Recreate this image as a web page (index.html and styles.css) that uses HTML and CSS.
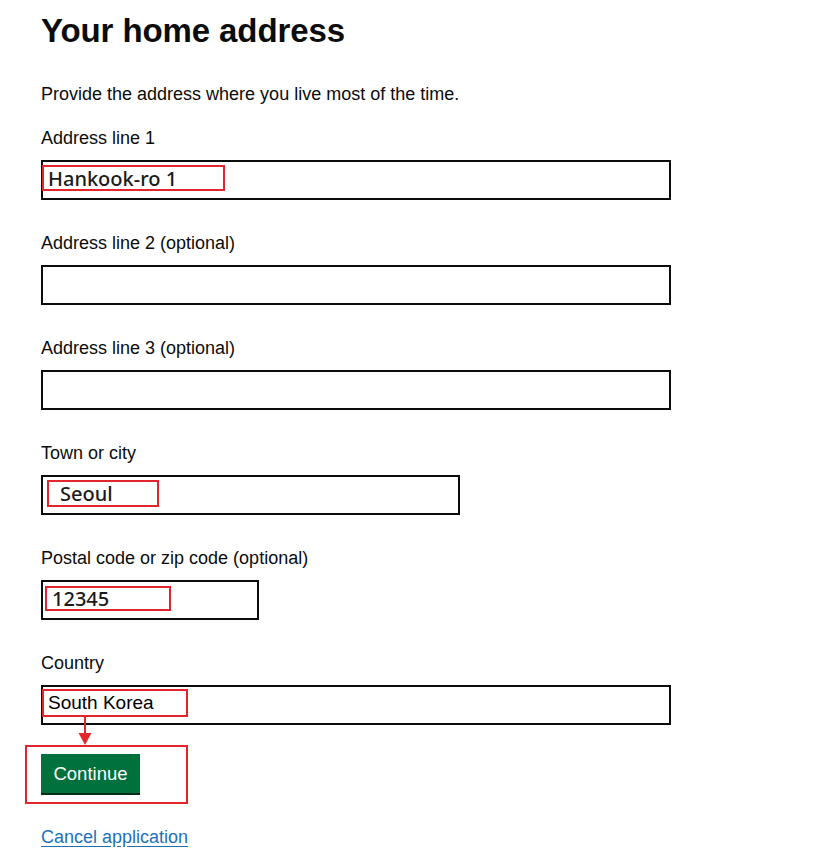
FILE: index.html
```html
<!DOCTYPE html>
<html lang="en">
<head>
  <meta charset="UTF-8" />
  <meta name="viewport" content="width=device-width, initial-scale=1.0"/>
  <title>Your home address</title>
  <link rel="stylesheet" href="styles.css">
</head>
<body>
  <main class="page">
    <h1>Your home address</h1>
    <p class="lead">Provide the address where you live most of the time.</p>

    <form id="addressForm">
      <div class="group">
        <label for="line1">Address line 1</label>
        <div class="input" id="line1">
          <span class="entered entered-line1">Hankook-ro 1</span>
        </div>
      </div>

      <div class="group">
        <label for="line2">Address line 2 (optional)</label>
        <div class="input" id="line2"></div>
      </div>

      <div class="group">
        <label for="line3">Address line 3 (optional)</label>
        <div class="input" id="line3"></div>
      </div>

      <div class="group">
        <label for="town">Town or city</label>
        <div class="input input-town" id="town">
          <span class="entered entered-town">Seoul</span>
        </div>
      </div>

      <div class="group">
        <label for="postcode">Postal code or zip code (optional)</label>
        <div class="input input-postcode" id="postcode">
          <span class="entered entered-postcode">12345</span>
        </div>
      </div>

      <div class="group group-last">
        <label for="country">Country</label>
        <div class="input" id="country">
          <span class="entered entered-country">South Korea</span>
        </div>
      </div>

      <div class="button-mark">
        <svg class="arrow" width="14" height="30" viewBox="0 0 14 30">
          <line x1="7" y1="0" x2="7" y2="18" stroke="#e3262b" stroke-width="2"/>
          <polygon points="0.5,16 13.5,16 7,28" fill="#e3262b"/>
        </svg>
        <button type="submit">Continue</button>
      </div>
    </form>

    <p class="cancel"><a href="#">Cancel application</a></p>
  </main>
</body>
</html>
```

FILE: styles.css
```css
body {
  margin: 0;
  font-family: "Liberation Sans", Arial, sans-serif;
  color: #0b0c0c;
  background-color: #ffffff;
}

.page {
  padding: 11px 0 0 41px;
}

h1 {
  margin: 0 0 31px;
  font-size: 33px;
  line-height: 40px;
  font-weight: 700;
  letter-spacing: -0.1px;
}

.lead {
  margin: 0 0 19px;
  font-size: 18px;
  line-height: 25px;
}

.group {
  margin-bottom: 31px;
}

.group-last {
  margin-bottom: 20px;
}

label {
  display: block;
  font-size: 18px;
  line-height: 25px;
  margin-bottom: 9px;
}

.input {
  box-sizing: border-box;
  width: 630px;
  height: 40px;
  border: 2px solid #0b0c0c;
  background: #fff;
}

.input-town {
  width: 419px;
}

.input-postcode {
  width: 218px;
}

/* red marks drawn over the typed values */
.entered {
  display: flex;
  align-items: center;
  box-sizing: border-box;
  border: 2px solid #e3262b;
  font-family: "Noto Sans", "Open Sans", sans-serif;
  font-size: 20px;
  font-weight: 500;
  color: #1b1b1b;
}

.entered-line1 {
  width: 183px;
  height: 26px;
  margin: 3px 0 0 -1px;
  padding-left: 4px;
}

.entered-town {
  width: 112px;
  height: 27px;
  margin: 3px 0 0 4px;
  padding-left: 11px;
}

.entered-postcode {
  width: 126px;
  height: 25px;
  margin: 4px 0 0 2px;
  padding-left: 5px;
}

.entered-country {
  width: 146px;
  height: 28px;
  margin: 2px 0 0 -1px;
  padding-left: 4px;
  font-family: "Liberation Sans", Arial, sans-serif;
  font-size: 19px;
  font-weight: 400;
  color: #000;
}

.button-mark {
  position: relative;
  display: inline-block;
  margin-left: -16px;
  padding: 7px 46px 9px 14px;
  border: 2px solid #e3262b;
}

.arrow {
  position: absolute;
  left: 51px;
  top: -30px;
}

button {
  display: block;
  margin: 0;
  padding: 8px 12px 7px;
  height: 39px;
  width: 99px;
  background-color: #00703c;
  border: none;
  box-shadow: 0 2px 0 #002d18;
  color: #ffffff;
  font-family: "Liberation Sans", Arial, sans-serif;
  font-size: 18.5px;
  line-height: 24px;
  cursor: pointer;
}

.cancel {
  margin: 21px 0 0;
  font-size: 18px;
  line-height: 25px;
}

.cancel a {
  color: #1d70b8;
  text-decoration: underline;
  text-underline-offset: 3px;
}
```
